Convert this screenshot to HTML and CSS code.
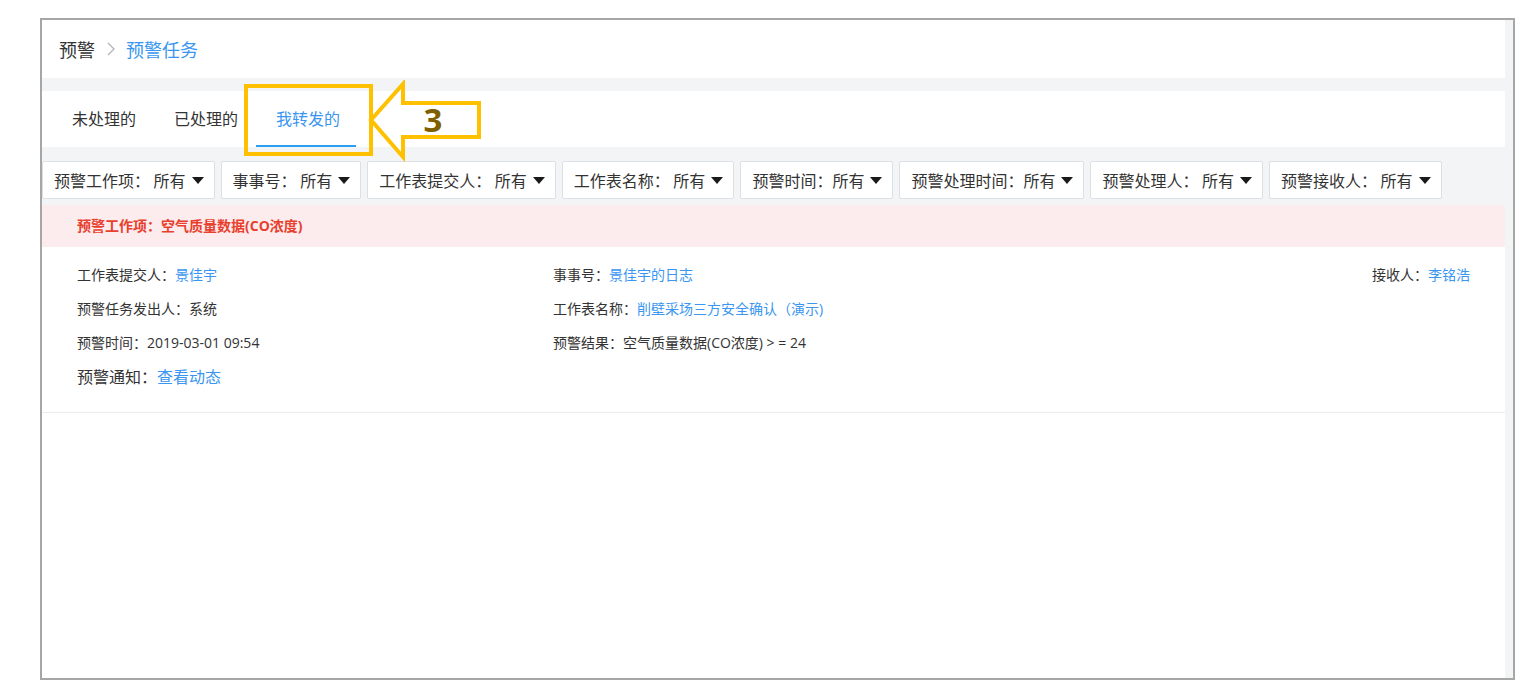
FILE: index.html
```html
<!DOCTYPE html>
<html lang="zh-CN">
<head>
  <meta charset="UTF-8">
  <title>预警任务</title>
  <link rel="stylesheet" href="styles.css">
</head>
<body>
  <div class="frame">
    <div class="main">
      <header class="crumbs">
        <span class="crumb">预警</span>
        <svg class="crumb-sep" width="10" height="16" viewBox="0 0 10 16"><path d="M2 2 L8 8 L2 14" fill="none" stroke="#b3b3b3" stroke-width="1.3"/></svg>
        <span class="crumb current">预警任务</span>
      </header>

      <nav class="tabs">
        <div class="tab">未处理的</div>
        <div class="tab">已处理的</div>
        <div class="tab active">我转发的</div>
      </nav>

      <div class="filters">
        <div class="filter">预警工作项： 所有<i class="caret"></i></div>
        <div class="filter">事事号： 所有<i class="caret"></i></div>
        <div class="filter">工作表提交人： 所有<i class="caret"></i></div>
        <div class="filter">工作表名称： 所有<i class="caret"></i></div>
        <div class="filter">预警时间：所有<i class="caret"></i></div>
        <div class="filter">预警处理时间：所有<i class="caret"></i></div>
        <div class="filter">预警处理人： 所有<i class="caret"></i></div>
        <div class="filter">预警接收人： 所有<i class="caret"></i></div>
      </div>

      <div class="alert-head">预警工作项：空气质量数据(CO浓度)</div>

      <div class="alert-body">
        <div class="info">
          <div>工作表提交人：<a class="link">景佳宇</a></div>
          <div>事事号：<a class="link">景佳宇的日志</a></div>
          <div class="right">接收人：<a class="link">李铭浩</a></div>
          <div>预警任务发出人：系统</div>
          <div>工作表名称：<a class="link">削壁采场三方安全确认（演示)</a></div>
          <div></div>
          <div>预警时间：2019-03-01 09:54</div>
          <div>预警结果：空气质量数据(CO浓度) &gt; = 24</div>
          <div></div>
        </div>
        <div class="notice">预警通知：<a class="link">查看动态</a></div>
      </div>
    </div>
  </div>

  <!-- 标注 -->
  <svg class="callout" width="250" height="86" viewBox="0 0 250 86">
    <rect x="6" y="6" width="125" height="68" fill="none" stroke="#ffc000" stroke-width="4"/>
    <polygon points="131,40 163,4 163,23 239,23 239,57 163,57 163,77" fill="#fff" stroke="#ffc000" stroke-width="4" stroke-linejoin="miter"/>
    <text x="193" y="52" text-anchor="middle" class="callout-num">3</text>
  </svg>
</body>
</html>
```

FILE: styles.css
```css
html, body {
  margin: 0;
  background: #fff;
  font-family: "Open Sans", "Noto Sans CJK SC", sans-serif;
  color: #333;
}
.frame {
  position: relative;
  margin: 18px 0 0 40px;
  width: 1471px;
  height: 658px;
  border: 2px solid #a6a6a6;
  background: #f3f4f6;
  overflow: hidden;
}
.main {
  width: 1463px;
  height: 100%;
  display: flex;
  flex-direction: column;
  background: #f3f4f6;
}
a.link { color: #3a96f0; cursor: pointer; }

/* 面包屑 */
.crumbs {
  height: 58px;
  background: #fff;
  display: flex;
  align-items: center;
  padding-left: 17px;
  font-size: 18px;
  margin-bottom: 13px;
}
.crumb { color: #333; }
.crumb.current { color: #3a96f0; }
.crumb-sep { margin: 0 10px 0 11px; }

/* 标签 */
.tabs {
  height: 56px;
  background: #fff;
  display: flex;
  gap: 2px;
  padding-left: 10px;
}
.tab {
  width: 100px;
  box-sizing: border-box;
  padding-left: 20px;
  font-size: 16px;
  line-height: 56px;
  color: #333;
}
.tab.active {
  color: #3a96f0;
  box-shadow: inset 0 -2px 0 #2aa0f0;
}

/* 筛选 */
.filters {
  display: flex;
  gap: 6px;
  padding: 14px 0 6px;
  background: #f3f4f6;
}
.filter {
  height: 38px;
  box-sizing: border-box;
  border: 1px solid #dcdfe3;
  border-radius: 2px;
  background: #fff;
  padding: 0 10px 0 11px;
  display: flex;
  align-items: center;
  font-family: "Noto Sans CJK SC", sans-serif;
  font-size: 16px;
  color: #333;
  white-space: pre;
}
.caret {
  display: inline-block;
  width: 0;
  height: 0;
  margin-left: 6px;
  border-left: 6px solid transparent;
  border-right: 6px solid transparent;
  border-top: 7px solid #1a1a1a;
}

/* 预警 */
.alert-head {
  height: 42px;
  line-height: 42px;
  background: #fdeced;
  color: #e8402e;
  font-size: 14px;
  font-weight: 700;
  padding-left: 35px;
}
.alert-body {
  background: #fff;
  padding: 11px 35px 18px;
  border-bottom: 1px solid #ebeef0;
}
.info {
  display: grid;
  grid-template-columns: 476px 1fr auto;
  font-size: 14px;
  line-height: 34px;
}
.info .right { text-align: right; }
.notice {
  font-size: 16px;
  line-height: 34px;
}
.main::after {
  content: "";
  flex: 1;
  background: #fff;
}

/* 标注 */
.callout {
  position: absolute;
  left: 240px;
  top: 80px;
  pointer-events: none;
}
.callout-num {
  font-family: "Open Sans", "Liberation Sans", sans-serif;
  font-weight: 700;
  font-size: 33px;
  fill: #7f6000;
}
```
